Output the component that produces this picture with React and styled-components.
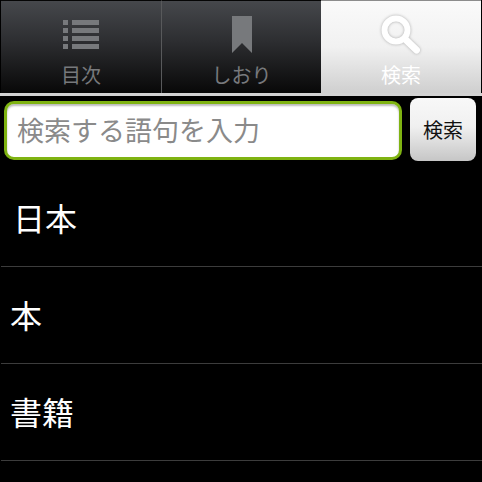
import React from "react";
import styled, { createGlobalStyle } from "styled-components";

const Global = createGlobalStyle`
  html, body { margin: 0; padding: 0; background: #000; overflow: hidden; }
  * { box-sizing: border-box; }
`;
const Page = styled.div`
  width: 482px; height: 482px; overflow: hidden; background: #000;
  font-family: "Noto Sans CJK JP", "Noto Sans", sans-serif;
  display: flex; flex-direction: column;
`;
const TabBar = styled.div`
  display: flex; height: 96px; padding: 0 1px 0 1px;
  background: #000;
  border-bottom: 3px solid #d2d2d2;
`;
const Tab = styled.div`
  width: ${p => p.$w}px;
  height: 93px;
  display: flex; flex-direction: column; align-items: center;
  padding-top: 1px;
  border-top: 1px solid ${p => p.$active ? "#8c8c8c" : "#050505"};
  border-right: ${p => p.$divider ? "1px solid #58595b" : "none"};
  background: ${p => p.$active
    ? "linear-gradient(#fafafa, #f1f1f1 50%, #cfcfcf)"
    : "linear-gradient(#46484c, #2c2d30 45%, #080808)"};
`;
const IconBox = styled.div`
  height: 58px; display: flex; align-items: center; justify-content: center;
  padding-top: 7px;
`;
const TabLabel = styled.span`
  font-size: 20px; line-height: 26px; margin-top: 2px;
  color: ${p => p.$active ? "#ffffff" : "#77797c"};
`;
const SearchRow = styled.div`
  display: flex; align-items: center; height: 72px; padding: 0 5px 6px 4px; gap: 8px;
`;
const Field = styled.div`
  width: 398px; height: 59px; margin-top: 3px; border-radius: 10px; background: #fff;
  border: 3px solid #7fb312; box-shadow: inset 0 2px 2px #bbb;
  display: flex; align-items: center; padding: 0 0 2px 10px;
  font-size: 27px; color: #8a8a8a;
`;
const Btn = styled.div`
  width: 66px; height: 63px; border-radius: 8px;
  background: linear-gradient(#f8f8f8, #f0f0f0 45%, #c6c6c6);
  display: flex; align-items: center; justify-content: center;
  font-size: 20px; color: #111;
`;
const List = styled.div`display: flex; flex-direction: column; margin-top: 2px;`;
const Row = styled.div`
  height: 97px; display: flex; align-items: center; padding-left: ${p => p.$pad}px;
  margin-left: 1px;
  border-bottom: 1px solid #3c3c3c;
  font-size: 32px; color: #fff;
  padding-bottom: 2px;
`;

const ListIcon = () => (
  <svg width="36" height="30" viewBox="0 0 36 30" fill="#77797c">
    <rect x="0" y="0" width="5" height="5" /><rect x="9" y="0" width="27" height="5" />
    <rect x="0" y="8" width="5" height="5" /><rect x="9" y="8" width="27" height="5" />
    <rect x="0" y="16" width="5" height="5" /><rect x="9" y="16" width="27" height="5" />
    <rect x="0" y="24" width="5" height="5" /><rect x="9" y="24" width="27" height="5" />
  </svg>
);
const BookmarkIcon = () => (
  <svg width="20" height="37" viewBox="0 0 20 37" fill="#77797c">
    <path d="M0 0H20V37L10 27L0 37Z" />
  </svg>
);
const SearchIcon = () => (
  <svg width="42" height="42" viewBox="0 0 42 42" fill="none" style={{ filter: "drop-shadow(0 0 1.5px #aaa)" }}>
    <circle cx="16" cy="16" r="11.5" stroke="#fff" strokeWidth="6" />
    <path d="M25 25L36.5 36" stroke="#fff" strokeWidth="7" strokeLinecap="round" />
  </svg>
);

export default function App() {
  return (
    <Page>
      <Global />
      <TabBar>
        <Tab $w={161} $divider>
          <IconBox><ListIcon /></IconBox>
          <TabLabel>目次</TabLabel>
        </Tab>
        <Tab $w={159}>
          <IconBox><BookmarkIcon /></IconBox>
          <TabLabel>しおり</TabLabel>
        </Tab>
        <Tab $w={160} $active>
          <IconBox><SearchIcon /></IconBox>
          <TabLabel $active>検索</TabLabel>
        </Tab>
      </TabBar>
      <SearchRow>
        <Field>検索する語句を入力</Field>
        <Btn>検索</Btn>
      </SearchRow>
      <List>
        <Row $pad={12}>日本</Row>
        <Row $pad={9}>本</Row>
        <Row $pad={9}>書籍</Row>
      </List>
    </Page>
  );
}
